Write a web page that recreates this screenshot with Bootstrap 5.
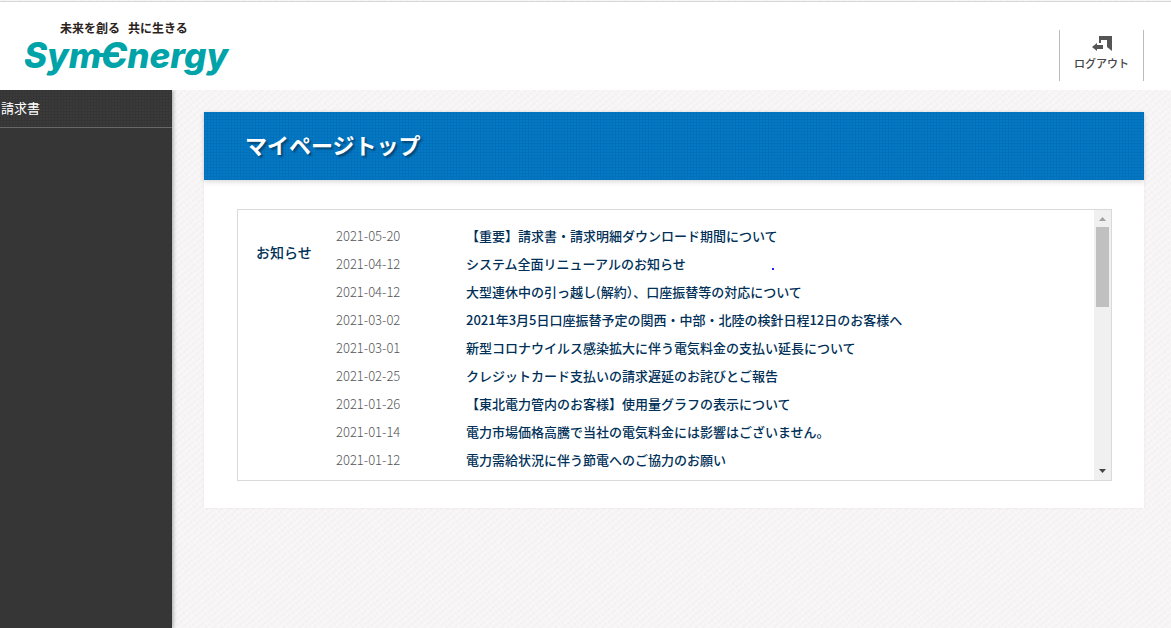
<!DOCTYPE html>
<html lang="ja">
<head>
<meta charset="utf-8">
<meta name="viewport" content="width=device-width, initial-scale=1">
<title>マイページトップ | SymEnergy</title>
<link rel="stylesheet" href="https://cdn.jsdelivr.net/npm/bootstrap@5.3.0/dist/css/bootstrap.min.css">
<style>
  body {
    font-family: "Noto Sans CJK JP", sans-serif;
    font-size: 13px;
    line-height: 20px;
    color: #003058;
    background-color: #f7f5f5;
    background-image:
      repeating-linear-gradient(50deg, rgba(255,255,255,.3) 0 1px, transparent 1px 4px),
      repeating-linear-gradient(-40deg, rgba(225,220,222,.15) 0 2px, transparent 2px 5px);
  }
  a { color: inherit; text-decoration: none; }
  a:hover { text-decoration: underline; }

  .site-header {
    height: 89px;
    margin-top: 1px;
    border-top: 1px solid #d8d8d8;
    padding: 0 27px 0 24px;
  }
  .brand { padding-top: 20px; }
  .brand-tagline { font-size: 12px; line-height: 12px; font-weight: 700; color: #2b2220; gap: 8px; padding-left: 36px; }
  .brand-word {
    font: italic 800 35px/42px Inter, "Open Sans", sans-serif;
    color: #00a3a8;
  }
  .brand-e { position: relative; }
  .brand-e::before {
    content: "";
    position: absolute;
    left: -2px;
    top: 19px;
    width: 20px;
    height: 4px;
    background: #00a3a8;
  }
  .logout {
    width: 85px;
    height: 51px;
    margin-top: 28px;
    border: solid #bbb;
    border-width: 0 1px;
    font-size: 11px;
    line-height: 18px;
    font-weight: 500;
    color: #444;
  }

  .side-nav { width: 172px; background: #363636; box-shadow: 1px 0 4px rgba(0,0,0,.35); clip-path: inset(0 -8px 0 0); }
  .side-link {
    display: block;
    padding: 8px 1px 9px;
    color: #fff;
    border-bottom: 1px solid #686868;
    background-color: #3a3a3a;
    background-image:
      repeating-linear-gradient(90deg, #353535 0 1px, transparent 1px 3px),
      repeating-linear-gradient(0deg, #353535 0 1px, transparent 1px 3px);
    background-clip: padding-box;
  }

  .page-main { padding: 22px 27px 32px 32px; }
  .panel { box-shadow: 0 0 3px rgba(0,0,0,.06); }
  .panel-title {
    padding: 16px 41px 20px;
    font-size: 22px;
    line-height: 32px;
    font-weight: 700;
    color: #fff;
    text-shadow: 2px 2px 2px rgba(0,0,0,.4);
    background-color: #0478c3;
    background-image:
      repeating-linear-gradient(90deg, rgba(0,100,175,.3) 0 1px, transparent 1px 3px),
      repeating-linear-gradient(0deg, rgba(0,100,175,.3) 0 1px, transparent 1px 3px);
    box-shadow: 0 2px 5px rgba(0,0,0,.15);
  }
  .panel-content { padding: 29px 32px 27px 33px; }
  .notice-box { height: 272px; border: 1px solid #d9d9d9; }
  .notice-heading { width: 80px; margin: 32px 0 0 18px; font-size: 14px; line-height: 20px; font-weight: 500; }
  .notice-table { margin-top: 12px; }
  .notice-table td { height: 28px; padding: 0; vertical-align: middle; font-weight: 500; }
  .notice-table td.notice-date { width: 130px; font-weight: 300; color: #555; }
  .speck { width: 2px; height: 2px; margin: 10px 0 0 86px; background: #22f; }

  .scroll-track { width: 17px; background: #f0f0f0; }
  .scroll-track svg { display: block; width: 17px; height: 17px; }
  .scroll-thumb { width: 13px; height: 80px; background: #c0c0c0; }
</style>
</head>
<body class="d-flex flex-column min-vh-100">
  <header class="site-header bg-white d-flex justify-content-between align-items-start">
    <a href="#" class="brand d-block" aria-label="SymEnergy">
      <span class="brand-tagline d-flex"><span>未来を創る</span><span>共に生きる</span></span>
      <span class="brand-word d-block">Sym<span class="brand-e">Є</span>nergy</span>
    </a>
    <a href="#" class="logout d-flex flex-column align-items-center pt-1">
      <svg width="22" height="20" viewBox="0 0 22 20" aria-hidden="true">
        <path d="M8 2h13v15l-5-4V6H10v3H8z" fill="#555"/>
        <path d="M1 13l5-4v2h6v4H6v2z" fill="#555"/>
      </svg>
      <span>ログアウト</span>
    </a>
  </header>

  <div class="d-flex flex-grow-1">
    <nav class="side-nav flex-shrink-0">
      <a class="side-link" href="#">請求書</a>
    </nav>
    <main class="page-main flex-grow-1">
      <section class="panel bg-white">
        <h1 class="panel-title mb-0">マイページトップ</h1>
        <div class="panel-content">
          <div class="notice-box d-flex overflow-hidden">
            <h2 class="notice-heading flex-shrink-0">お知らせ</h2>
            <div class="flex-grow-1">
              <table class="notice-table w-100">
                <tbody>
                  <tr><td class="notice-date">2021-05-20</td><td><a href="#">【重要】請求書・請求明細ダウンロード期間について</a></td></tr>
                  <tr><td class="notice-date">2021-04-12</td><td><div class="d-flex align-items-center"><a href="#">システム全面リニューアルのお知らせ</a><span class="speck"></span></div></td></tr>
                  <tr><td class="notice-date">2021-04-12</td><td><a href="#">大型連休中の引っ越し(解約）、口座振替等の対応について</a></td></tr>
                  <tr><td class="notice-date">2021-03-02</td><td><a href="#">2021年3月5日口座振替予定の関西・中部・北陸の検針日程12日のお客様へ</a></td></tr>
                  <tr><td class="notice-date">2021-03-01</td><td><a href="#">新型コロナウイルス感染拡大に伴う電気料金の支払い延長について</a></td></tr>
                  <tr><td class="notice-date">2021-02-25</td><td><a href="#">クレジットカード支払いの請求遅延のお詫びとご報告</a></td></tr>
                  <tr><td class="notice-date">2021-01-26</td><td><a href="#">【東北電力管内のお客様】使用量グラフの表示について</a></td></tr>
                  <tr><td class="notice-date">2021-01-14</td><td><a href="#">電力市場価格高騰で当社の電気料金には影響はございません。</a></td></tr>
                  <tr><td class="notice-date">2021-01-12</td><td><a href="#">電力需給状況に伴う節電へのご協力のお願い</a></td></tr>
                </tbody>
              </table>
            </div>
            <div class="scroll-track flex-shrink-0 d-flex flex-column align-items-center" aria-hidden="true">
              <svg viewBox="0 0 17 17"><path d="M5 11l3.500-4 3.500 4z" fill="#a0a0a0"/></svg>
              <div class="scroll-thumb"></div>
              <svg class="mt-auto" viewBox="0 0 17 17"><path d="M5 6h7l-3.500 4z" fill="#444"/></svg>
            </div>
          </div>
        </div>
      </section>
    </main>
  </div>
<script src="https://cdn.jsdelivr.net/npm/bootstrap@5.3.0/dist/js/bootstrap.bundle.min.js"></script>
</body>
</html>
